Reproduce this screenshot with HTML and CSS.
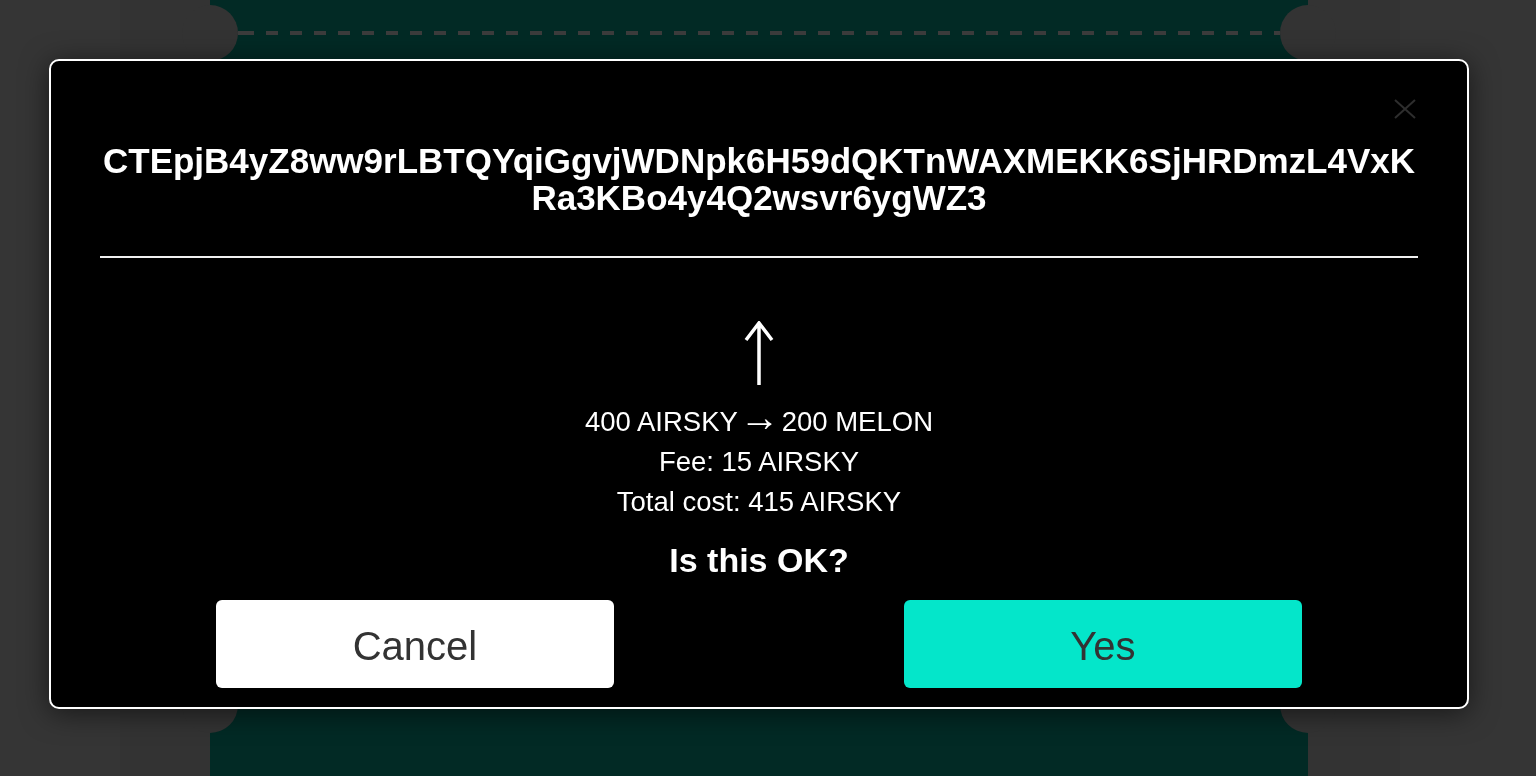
FILE: index.html
```html
<!DOCTYPE html>
<html lang="en">
<head>
<meta charset="utf-8">
<title>Confirm</title>
<link rel="stylesheet" href="styles.css">
</head>
<body>
<div class="page">
  <aside class="side side-left"></aside>
  <div class="gutter"></div>
  <main class="ticket">
    <div class="ticket-top">
      <span class="notch notch-tl"></span>
      <div class="dash"></div>
      <span class="notch notch-tr"></span>
    </div>
    <div class="ticket-bottom">
      <span class="notch notch-bl"></span>
      <span class="notch notch-br"></span>
    </div>
  </main>
  <div class="gutter gutter-right"></div>
  <aside class="side side-right"></aside>
</div>

<div class="modal">
  <button class="close" aria-label="Close">
    <svg width="22" height="20" viewBox="0 0 22 20"><path d="M1 1 L21 19 M21 1 L1 19" stroke="#2e2e2e" stroke-width="2" fill="none"/></svg>
  </button>
  <h1 class="address">CTEpjB4yZ8ww9rLBTQYqiGgvjWDNpk6H59dQKTnWAXMEKK6SjHRDmzL4VxKRa3KBo4y4Q2wsvr6ygWZ3</h1>
  <hr class="rule">
  <div class="arrow">
    <svg width="30" height="64" viewBox="0 0 30 64"><path d="M15 2 L15 64 M2 19 L15 2 L28 19" stroke="#fff" stroke-width="3.5" fill="none" stroke-linejoin="miter"/></svg>
  </div>
  <div class="details">
    <p>400 AIRSKY <span class="to">→</span> 200 MELON</p>
    <p>Fee: 15 AIRSKY</p>
    <p>Total cost: 415 AIRSKY</p>
  </div>
  <p class="question">Is this OK?</p>
  <div class="actions">
    <button class="btn btn-cancel">Cancel</button>
    <button class="btn btn-yes">Yes</button>
  </div>
</div>
</body>
</html>
```
FILE: styles.css
```css
* { box-sizing: border-box; }
html, body {
  margin: 0;
  padding: 0;
  height: 100%;
  overflow: hidden;
  font-family: "Liberation Sans", Arial, Helvetica, sans-serif;
}
.page {
  display: flex;
  height: 776px;
  background: #333333;
}
.side { width: 120px; background: #353535; }
.side-right { width: 136px; }
.gutter { width: 90px; background: #333333; }
.gutter-right { width: 92px; }
.ticket {
  width: 1098px;
  background: #022a25;
  display: flex;
  flex-direction: column;
  justify-content: space-between;
}
.ticket-top {
  position: relative;
  height: 66px;
  display: flex;
  align-items: flex-start;
}
.dash {
  margin: 31px 28px 0;
  flex: 1;
  height: 4px;
  background: repeating-linear-gradient(90deg, #3c3c3c 0 12px, transparent 12px 24px);
  background-position: 4px 0;
}
.ticket-bottom {
  position: relative;
  height: 100px;
}
.notch {
  position: absolute;
  width: 56px;
  height: 56px;
  border-radius: 50%;
  background: #333333;
}
.notch-tl { left: -28px; top: 5px; }
.notch-tr { right: -28px; top: 5px; }
.notch-bl { left: -28px; top: 1px; }
.notch-br { right: -28px; top: 1px; }

.modal {
  position: fixed;
  left: 49px;
  top: 59px;
  width: 1420px;
  height: 650px;
  background: #000;
  border: 2px solid #fff;
  border-radius: 10px;
  box-shadow: 0 4px 28px rgba(0, 0, 0, 0.55);
  padding: 81px 49px 0;
  color: #fff;
  text-align: center;
}
.close {
  position: absolute;
  top: 38px;
  right: 51px;
  padding: 0;
  border: 0;
  background: none;
  width: 22px;
  height: 20px;
}
.close svg { display: block; }
.address {
  margin: 0;
  font-size: 35px;
  line-height: 37px;
  font-weight: bold;
  word-break: break-all;
}
.rule {
  margin: 40px 0 0;
  border: 0;
  height: 2px;
  background: #f0f0f0;
}
.arrow {
  margin-top: 63px;
  height: 64px;
  display: flex;
  justify-content: center;
}
.arrow svg { display: block; }
.details {
  margin-top: 17px;
  font-size: 27.5px;
  line-height: 40px;
}
.details p { margin: 0; }
.to {
  font-size: 40px;
  line-height: 0;
  margin: 0 -5.5px;
}
.question {
  margin: 18px 0 0;
  font-size: 34px;
  line-height: 40px;
  font-weight: bold;
}
.actions {
  margin-top: 20px;
  display: flex;
  justify-content: center;
  gap: 290px;
}
.btn {
  width: 398px;
  height: 88px;
  border: 0;
  border-radius: 6px;
  font-family: inherit;
  font-size: 40px;
  color: #333;
  padding: 4px 0 0;
}
.btn-cancel { background: #fff; }
.btn-yes { background: #04e6ca; }
```
